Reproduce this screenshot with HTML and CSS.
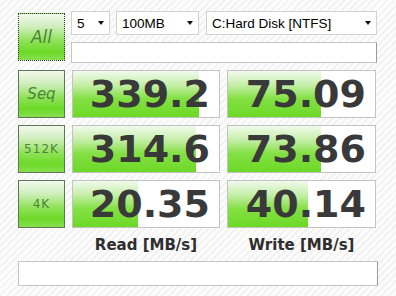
FILE: index.html
```html
<!DOCTYPE html>
<html lang="en">
<head>
    <meta charset="UTF-8">
    <title>Disk Mark</title>
    <link rel="stylesheet" href="styles.css">
</head>
<body>
    <div class="window">
        <div class="top">
            <div class="btn btn-all">All</div>
            <div class="controls">
                <div class="combos">
                    <div class="combo combo-count"><span>5</span><i class="arrow"></i></div>
                    <div class="combo combo-size"><span>100MB</span><i class="arrow"></i></div>
                    <div class="combo combo-drive"><span>C:Hard Disk [NTFS]</span><i class="arrow"></i></div>
                </div>
                <div class="field"></div>
            </div>
        </div>

        <div class="results">
            <div class="btn btn-seq">Seq</div>
            <div class="result" style="--w: 126px">339.2</div>
            <div class="result" style="--w: 93px">75.09</div>

            <div class="btn btn-small">512K</div>
            <div class="result" style="--w: 123px">314.6</div>
            <div class="result" style="--w: 93px">73.86</div>

            <div class="btn btn-small">4K</div>
            <div class="result" style="--w: 65px">20.35</div>
            <div class="result" style="--w: 80px">40.14</div>
        </div>

        <div class="units">
            <span></span>
            <span>Read [MB/s]</span>
            <span>Write [MB/s]</span>
        </div>

        <div class="field field-status"></div>
    </div>
</body>
</html>
```

FILE: styles.css
```css
* {
    margin: 0;
    padding: 0;
    box-sizing: border-box;
}

html, body {
    width: 396px;
    height: 296px;
    overflow: hidden;
}

body {
    font-family: 'Liberation Sans', Arial, sans-serif;
    color: #000000;
    background: repeating-linear-gradient(135deg, #fcfcfc 0px, #fcfcfc 3px, #f2f2f2 3px, #f2f2f2 5px);
}

.window {
    padding: 11px 0 0 18px;
}

.top {
    display: flex;
    gap: 6px;
}

.controls {
    width: 306px;
}

.combos {
    display: flex;
    height: 24px;
}

.combo {
    display: flex;
    align-items: center;
    justify-content: space-between;
    padding: 0 5px;
    background: #ffffff;
    border: 1px solid #d2d2d2;
    font-size: 13.5px;
}

.combo-count { width: 39px; }
.combo-size { width: 83px; margin-left: 6px; }
.combo-drive { width: 171px; margin-left: 7px; }

.arrow {
    width: 0;
    height: 0;
    border-left: 3px solid transparent;
    border-right: 3px solid transparent;
    border-top: 4px solid #111111;
}

.field {
    height: 21px;
    margin-top: 7px;
    background: #ffffff;
    border: 1px solid #c6c6c6;
    border-right-color: #9a9a9a;
}

/* green buttons */
.btn {
    width: 47px;
    height: 48px;
    display: flex;
    align-items: center;
    justify-content: center;
    border: 1px solid #5f7757;
    background: linear-gradient(to bottom, #f2f9ee 0%, #cfeebb 28%, #8fe258 58%, #6cd928 82%, #86e04e 100%);
    color: #4a8636;
    font-family: 'DejaVu Sans', Verdana, sans-serif;
    font-style: italic;
}

.btn-all {
    margin-top: 2px;
    border: 1px dotted #3a3a3a;
    font-size: 17px;
}

.btn-seq {
    font-size: 15px;
}

.btn-small {
    font-size: 12px;
    font-style: normal;
    letter-spacing: 1px;
}

/* results */
.results {
    display: grid;
    grid-template-columns: 47px 148px 149px;
    grid-auto-rows: 48px;
    column-gap: 7px;
    row-gap: 7px;
    margin-top: 7px;
}

.result {
    display: flex;
    align-items: center;
    justify-content: flex-end;
    padding-right: 9px;
    border: 1px solid #c3c3c3;
    background:
        linear-gradient(to bottom, #f1faec 0%, #c6efaa 30%, #84e044 60%, #6cd926 100%) no-repeat,
        #ffffff;
    background-size: var(--w) 100%, auto;
    color: #393939;
    font-family: 'DejaVu Sans', Verdana, sans-serif;
    font-weight: bold;
    font-size: 38px;
}

.units {
    display: grid;
    grid-template-columns: 47px 148px 149px;
    column-gap: 7px;
    height: 33px;
    align-items: center;
    text-align: center;
    font-family: 'DejaVu Sans', Verdana, sans-serif;
    font-weight: bold;
    font-size: 15px;
    color: #2e2e2e;
}

.field-status {
    width: 360px;
    height: 25px;
    margin-top: 0;
}
```
